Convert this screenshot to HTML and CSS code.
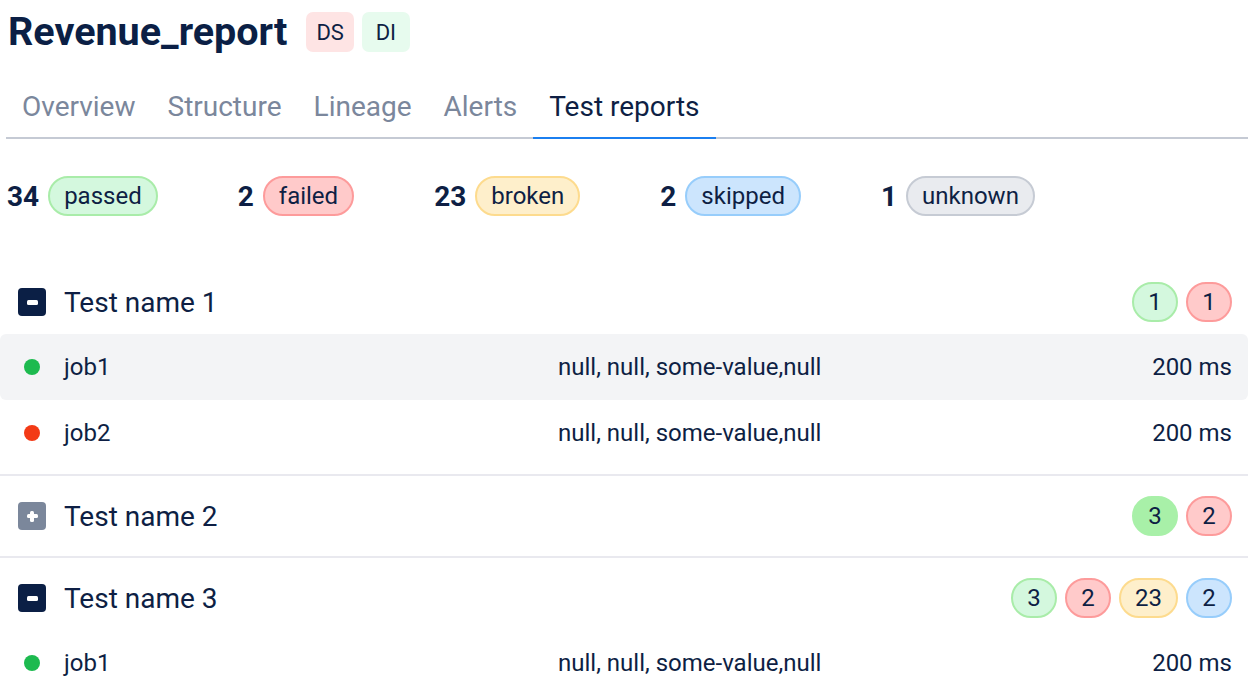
FILE: index.html
```html
<!DOCTYPE html>
<html lang="en">
<head>
<meta charset="utf-8">
<title>Revenue_report</title>
<link rel="stylesheet" href="styles.css">
</head>
<body>
<div class="page">
  <header class="head">
    <div class="title-row">
      <h1 class="title">Revenue_report</h1>
      <span class="tag tag-ds">DS</span>
      <span class="tag tag-di">DI</span>
    </div>
    <nav class="tabs">
      <a class="tab">Overview</a>
      <a class="tab">Structure</a>
      <a class="tab">Lineage</a>
      <a class="tab">Alerts</a>
      <a class="tab active">Test reports</a>
    </nav>
    <div class="stats">
      <div class="stat"><span class="num">34</span><span class="pill green">passed</span></div>
      <div class="stat"><span class="num">2</span><span class="pill red">failed</span></div>
      <div class="stat"><span class="num">23</span><span class="pill yellow">broken</span></div>
      <div class="stat"><span class="num">2</span><span class="pill blue">skipped</span></div>
      <div class="stat"><span class="num">1</span><span class="pill gray">unknown</span></div>
    </div>
  </header>

  <section class="groups">
    <div class="group">
      <div class="group-head">
        <span class="toggle open"><span class="bar"></span></span>
        <span class="group-name">Test name 1</span>
        <span class="counts">
          <span class="pill green">1</span>
          <span class="pill red">1</span>
        </span>
      </div>
      <div class="job hl">
        <span class="dot ok"></span>
        <span class="job-name">job1</span>
        <span class="job-val">null, null, some-value,null</span>
        <span class="job-time">200 ms</span>
      </div>
      <div class="job">
        <span class="dot fail"></span>
        <span class="job-name">job2</span>
        <span class="job-val">null, null, some-value,null</span>
        <span class="job-time">200 ms</span>
      </div>
    </div>

    <div class="group">
      <div class="group-head">
        <span class="toggle closed"><span class="bar"></span><span class="bar v"></span></span>
        <span class="group-name">Test name 2</span>
        <span class="counts">
          <span class="pill green-solid">3</span>
          <span class="pill red">2</span>
        </span>
      </div>
    </div>

    <div class="group">
      <div class="group-head">
        <span class="toggle open"><span class="bar"></span></span>
        <span class="group-name">Test name 3</span>
        <span class="counts">
          <span class="pill green">3</span>
          <span class="pill red">2</span>
          <span class="pill yellow">23</span>
          <span class="pill blue">2</span>
        </span>
      </div>
      <div class="job">
        <span class="dot ok"></span>
        <span class="job-name">job1</span>
        <span class="job-val">null, null, some-value,null</span>
        <span class="job-time">200 ms</span>
      </div>
    </div>
  </section>
</div>
</body>
</html>
```
FILE: styles.css
```css
* { box-sizing: border-box; }
html, body { margin: 0; padding: 0; background: #ffffff; }
body {
  font-family: Roboto, "Liberation Sans", Arial, sans-serif;
  color: #0e1f44;
  overflow: hidden;
}
.page { width: 1248px; }

.head { padding-left: 6px; }

.title-row {
  display: flex;
  align-items: center;
  height: 40px;
  margin-top: 12px;
  gap: 8px;
  padding-left: 2px;
}
.title {
  margin: 0 11px 0 0;
  font-size: 39.5px;
  line-height: 40px;
  font-weight: 700;
  color: #0b1f45;
}
.tag {
  display: inline-flex;
  align-items: center;
  justify-content: center;
  height: 40px;
  min-width: 46px;
  padding: 0 10px;
  border-radius: 7px;
  font-size: 22px;
  color: #0e1f44;
}
.tag-ds { background: #fee4e4; }
.tag-di { background: #e7fbee; min-width: 48px; }

.tabs {
  display: flex;
  margin-top: 24px;
  border-bottom: 2px solid #c5cad4;
}
.tab {
  display: block;
  padding: 15px 16px 14px;
  font-size: 28px;
  line-height: 32px;
  color: #7b879c;
  margin-bottom: -2px;
  border-bottom: 2px solid transparent;
}
.tab.active {
  color: #0e1f44;
  border-bottom: 2px solid #1b7ff0;
}

.stats {
  display: flex;
  align-items: center;
  gap: 80px;
  margin-top: 37px;
  padding-left: 1px;
}
.stat {
  display: flex;
  align-items: center;
  gap: 9px;
}
.num {
  font-size: 28px;
  font-weight: 700;
  color: #0e1f44;
}

.pill {
  display: inline-flex;
  align-items: center;
  justify-content: center;
  height: 40px;
  padding: 0 14px;
  border: 2px solid;
  border-radius: 20px;
  font-size: 24px;
  color: #0e1f44;
}
.pill.green { background: #d4f8de; border-color: #a9eca9; }
.pill.green-solid { background: #a8f0a8; border-color: #a8f0a8; }
.pill.red { background: #ffcaca; border-color: #fd9b9b; }
.pill.yellow { background: #feefcb; border-color: #fddb8e; }
.pill.blue { background: #cce5fd; border-color: #97cdfb; }
.pill.gray { background: #e9ebef; border-color: #c6cbd4; }

.groups { margin-top: 46px; }
.group {
  padding: 8px 0;
  border-bottom: 2px solid #e9e9ef;
}
.group-head {
  display: flex;
  align-items: center;
  height: 64px;
  padding: 0 16px 0 18px;
}
.toggle {
  position: relative;
  width: 28px;
  height: 28px;
  border-radius: 4px;
  display: inline-flex;
  align-items: center;
  justify-content: center;
  flex: none;
}
.toggle.open { background: #0b1f45; }
.toggle.closed { background: #7b879b; }
.bar {
  width: 11px;
  height: 5px;
  border-radius: 1.5px;
  background: #ffffff;
}
.toggle.closed .bar {
  width: 11px;
  height: 4px;
}
.toggle.closed .bar.v {
  position: absolute;
  width: 4px;
  height: 11px;
}
.group-name {
  margin-left: 18px;
  font-size: 28px;
  color: #0e1f44;
  flex: 1;
}
.counts {
  display: flex;
  gap: 8px;
}
.counts .pill { min-width: 46px; padding: 0 14px; }

.job {
  display: grid;
  grid-template-columns: 40px 494px 1fr auto;
  align-items: center;
  height: 66px;
  padding: 0 16px 0 24px;
  font-size: 24px;
  color: #0e1f44;
}
.job.hl {
  background: #f3f4f6;
  border-radius: 6px;
}
.dot {
  width: 16px;
  height: 16px;
  border-radius: 50%;
}
.dot.ok { background: #1dba4f; }
.dot.fail { background: #f33a16; }
.job-time { text-align: right; }
```
